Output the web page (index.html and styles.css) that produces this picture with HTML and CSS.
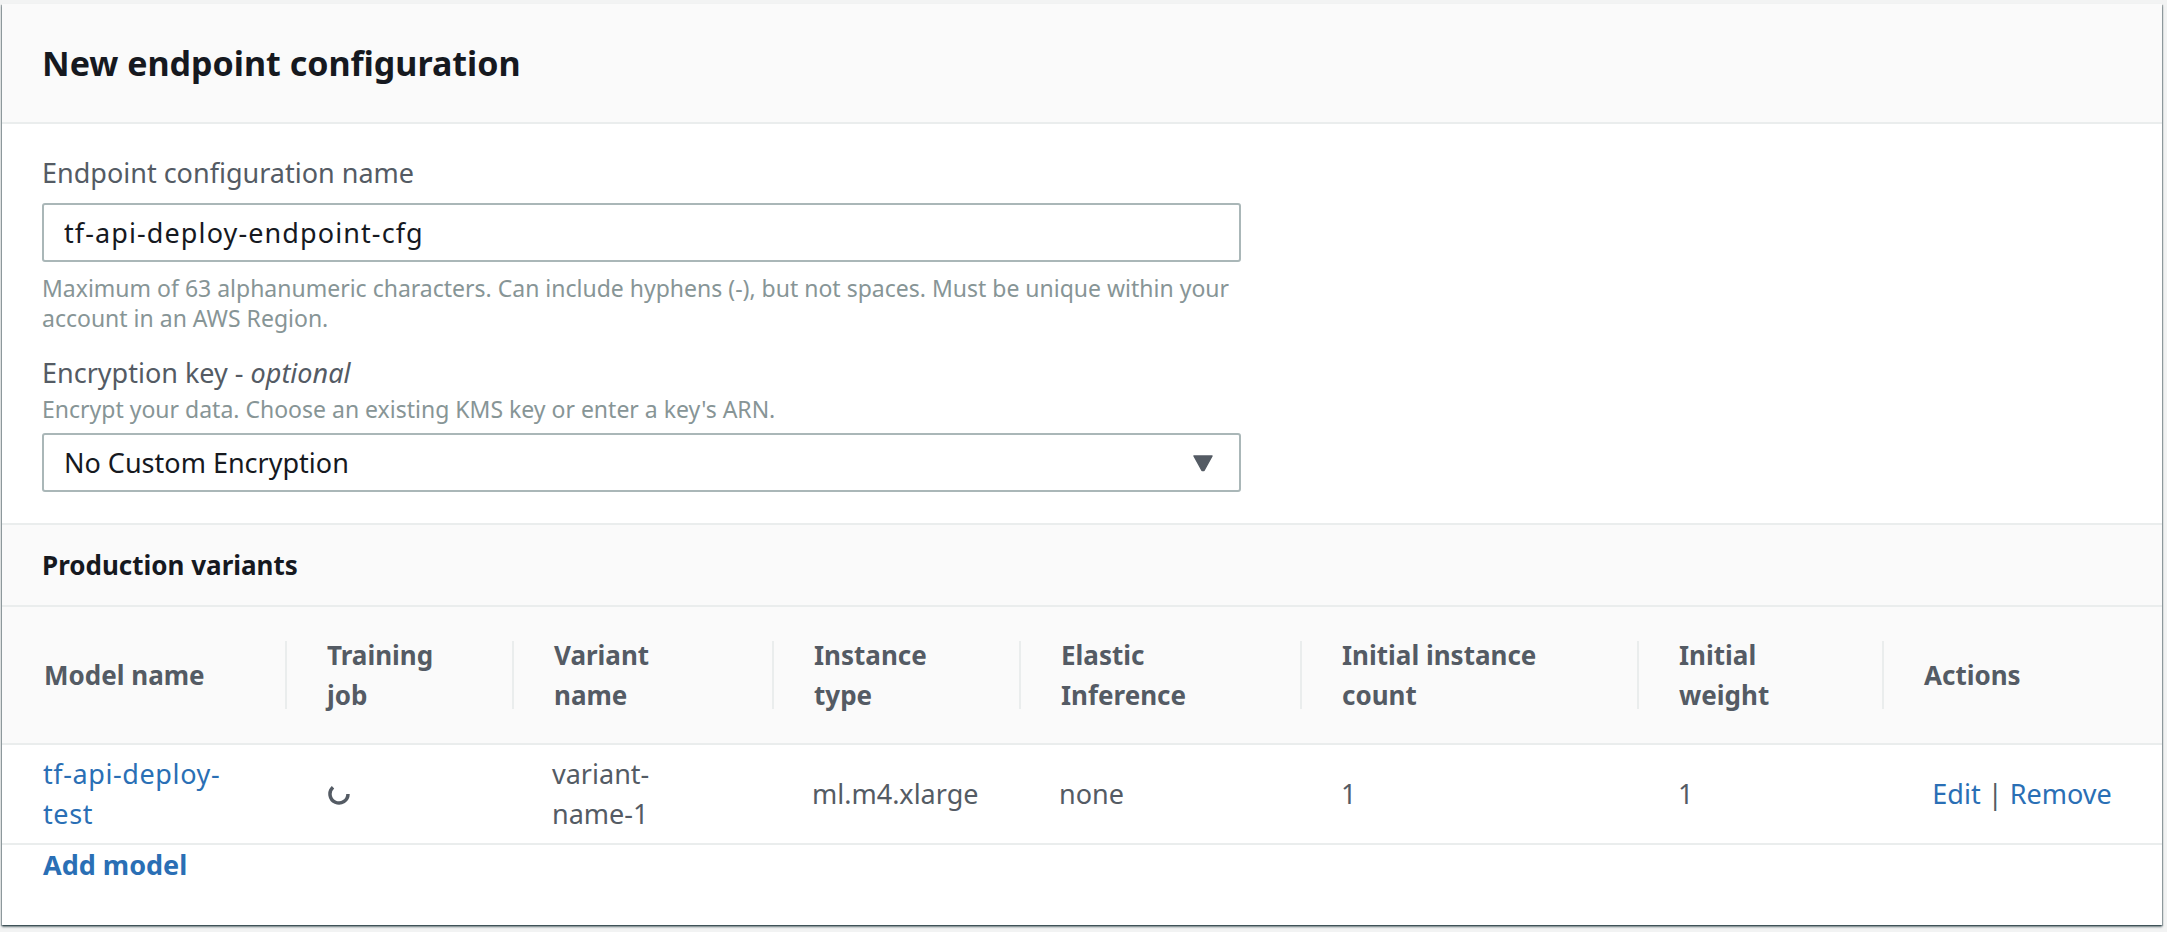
FILE: index.html
```html
<!DOCTYPE html>
<html lang="en">
<head>
  <meta charset="UTF-8">
  <title>New endpoint configuration</title>
  <link rel="stylesheet" href="styles.css">
</head>
<body>
  <div class="panel">
    <h1 class="panel-title">New endpoint configuration</h1>

    <!-- Name and key -->
    <form class="config-form">
      <label class="field-label" for="configName">Endpoint configuration name</label>
      <input class="text-input name-input" type="text" id="configName" value="tf-api-deploy-endpoint-cfg">
      <p class="hint hint-below">Maximum of 63 alphanumeric characters. Can include hyphens (-), but not spaces. Must be unique within your account in an AWS Region.</p>

      <label class="field-label field-second" for="encryptionKey">Encryption key - <em>optional</em></label>
      <p class="hint hint-above">Encrypt your data. Choose an existing KMS key or enter a key's ARN.</p>
      <div class="select-wrap">
        <select class="text-input select-input" id="encryptionKey">
          <option>No Custom Encryption</option>
        </select>
        <svg class="select-arrow" width="22" height="17" viewBox="0 0 22 17"><path d="M2 1h18l-8 14.5h-2z" fill="#545b64" stroke="#545b64" stroke-width="1.5" stroke-linejoin="round"/></svg>
      </div>
    </form>

    <!-- Production variants -->
    <h2 class="section-title">Production variants</h2>
    <table class="variants">
      <thead>
        <tr>
          <th class="col-model"><span class="th-inner th-first">Model name</span></th>
          <th class="col-job"><span class="th-inner">Training job</span></th>
          <th class="col-variant"><span class="th-inner">Variant name</span></th>
          <th class="col-type"><span class="th-inner">Instance type</span></th>
          <th class="col-elastic"><span class="th-inner">Elastic Inference</span></th>
          <th class="col-count"><span class="th-inner">Initial instance count</span></th>
          <th class="col-weight"><span class="th-inner">Initial weight</span></th>
          <th class="col-actions"><span class="th-inner">Actions</span></th>
        </tr>
      </thead>
      <tbody>
        <tr>
          <td><a class="link model-link" href="#">tf-api-deploy-test</a></td>
          <td>
            <svg class="spinner" width="24" height="24" viewBox="0 0 24 24"><path d="M21 12a9 9 0 1 1-15-6.7" fill="none" stroke="#545b64" stroke-width="3.5"/></svg>
          </td>
          <td>variant-name-1</td>
          <td>ml.m4.xlarge</td>
          <td>none</td>
          <td class="num">1</td>
          <td class="num">1</td>
          <td class="cell-actions"><a class="link" href="#">Edit</a> | <a class="link" href="#">Remove</a></td>
        </tr>
      </tbody>
    </table>
    <a class="add-model" href="#">Add model</a>
  </div>
</body>
</html>
```

FILE: styles.css
```css
/* General styling */
html, body {
  height: 100%;
}
body {
  font-family: "Noto Sans", "Open Sans", sans-serif;
  background-color: #f2f3f3;
  margin: 0;
  padding: 4px 5px 0 2px;
  box-sizing: border-box;
  overflow: hidden;
  color: #16191f;
}
.panel {
  height: 921px;
  background-color: #fff;
  box-shadow: 0 2px 2px rgba(0, 28, 36, 0.5), 1px 1px 1px rgba(0, 28, 36, 0.3), -1px 1px 1px rgba(0, 28, 36, 0.3);
}
.panel-title {
  margin: 0;
  height: 118px;
  padding-left: 40px;
  font-size: 34px;
  line-height: 118px;
  font-weight: 700;
  background-color: #fafafa;
  border-bottom: 2px solid #eaeded;
}

/* Form section */
.config-form {
  padding: 29px 0 31px 40px;
}
.field-label {
  display: block;
  font-size: 27px;
  line-height: 40px;
  color: #545b64;
}
.field-second {
  margin-top: 20px;
}
.hint {
  margin: 0;
  width: 1199px;
  font-size: 23px;
  line-height: 30px;
  color: #879596;
}
.hint-below {
  margin-top: 11px;
}
.hint-above {
  margin-top: 1px;
  margin-bottom: 9px;
}
.text-input {
  display: block;
  width: 1199px;
  height: 59px;
  margin-top: 10px;
  padding: 0 20px;
  box-sizing: border-box;
  font-family: inherit;
  font-size: 27px;
  color: #16191f;
  background-color: #fff;
  border: 2px solid #aab7b8;
  border-radius: 3px;
  outline: none;
}
.name-input {
  letter-spacing: 1.1px;
}
.select-wrap {
  position: relative;
  width: 1199px;
}
.select-input {
  margin-top: 0;
  appearance: none;
}
.select-arrow {
  position: absolute;
  top: 22px;
  right: 27px;
}

/* Production variants */
.section-title {
  margin: 0;
  height: 80px;
  padding-left: 40px;
  font-size: 26px;
  line-height: 80px;
  font-weight: 700;
  background-color: #fafafa;
  border-top: 2px solid #eaeded;
  border-bottom: 2px solid #eaeded;
}
.variants {
  width: 100%;
  table-layout: fixed;
  border-collapse: collapse;
  font-size: 27px;
  line-height: 40px;
  color: #545b64;
}
.variants th {
  height: 136px;
  padding: 0;
  text-align: left;
  font-size: 26px;
  font-weight: 700;
  background-color: #fafafa;
  border-bottom: 2px solid #eaeded;
}
.th-inner {
  display: flex;
  align-items: center;
  height: 68px;
  padding: 0 44px 0 40px;
  border-left: 2px solid #eaeded;
}
.th-first {
  padding-left: 42px;
  border-left: none;
}
.col-model { width: 283px; }
.col-job { width: 227px; }
.col-variant { width: 260px; }
.col-type { width: 247px; }
.col-elastic { width: 281px; }
.col-count { width: 337px; }
.col-weight { width: 245px; }
.variants td {
  height: 98px;
  padding: 0 50px 0 40px;
  border-bottom: 2px solid #eaeded;
}
.variants td:first-child {
  padding-left: 41px;
}
.variants td.num {
  padding-left: 41px;
}
.variants td.cell-actions {
  padding: 0;
  text-align: center;
}
.spinner {
  display: block;
  margin-left: 2px;
}
.link {
  color: #2a6fb5;
  text-decoration: none;
}
.model-link {
  letter-spacing: 0.6px;
}
.add-model {
  display: block;
  padding-left: 41px;
  font-size: 27px;
  line-height: 40px;
  font-weight: 700;
  color: #2a6fb5;
  text-decoration: none;
}
```
